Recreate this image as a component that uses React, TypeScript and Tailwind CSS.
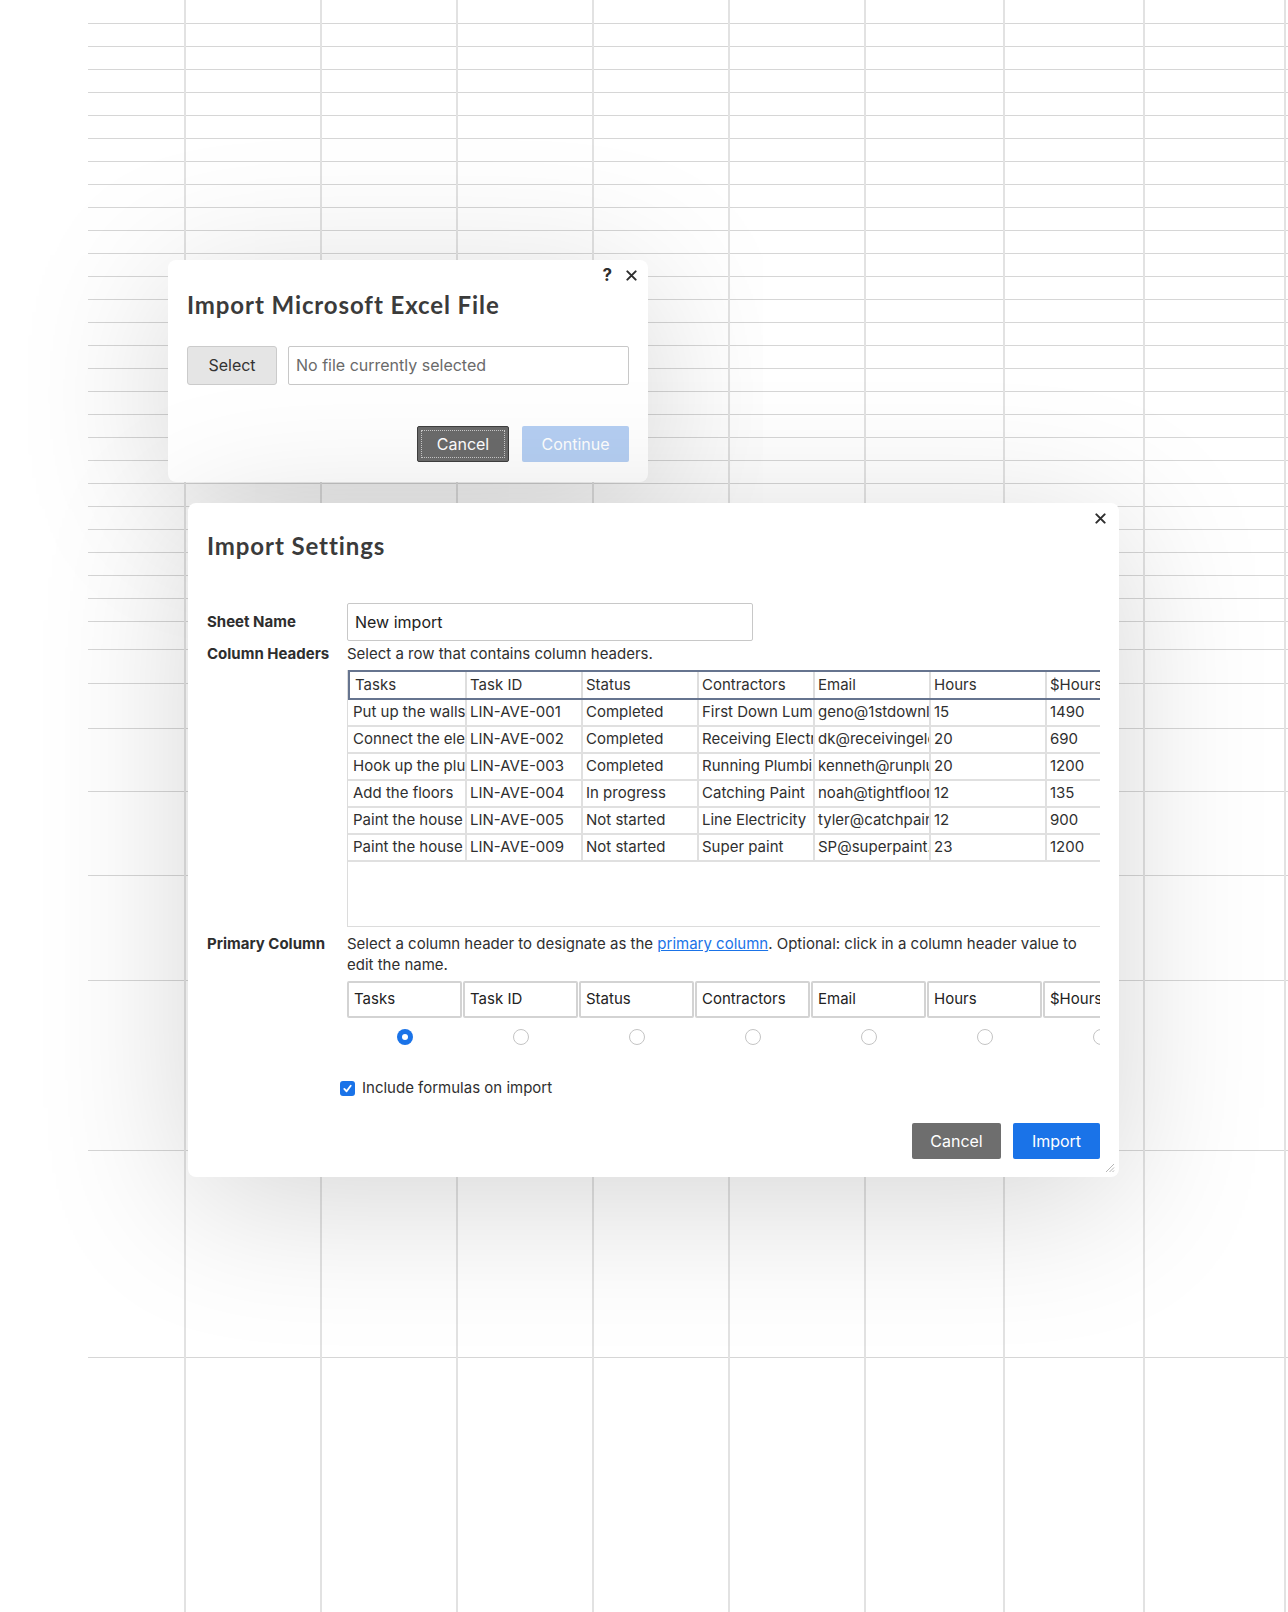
import React from 'react'

// ─── Background sheet grid ────────────────────────────────────────────────────

const rowLines = [
   23, 46, 69, 92, 115, 138, 161, 184, 207, 230, 253, 276, 299, 322, 345, 368, 391, 414,
   437, 460, 483, 506, 529, 552, 575, 598, 621, 649, 683, 728, 791, 875, 980, 1150, 1357,
]
const colLines = [185, 321, 457, 593, 729, 865, 1004, 1144, 1285]

const SheetGrid = () => (
   <div className="absolute inset-0">
      <div className="pl-[88px]">
         {rowLines.map((y, i) => (
            <div
               key={y}
               className="border-b border-[#d6d6d6]"
               style={{ height: y - (i === 0 ? -1 : rowLines[i - 1]) }}
            />
         ))}
      </div>
      <div className="absolute inset-0 flex">
         <div className="w-[184px] shrink-0" />
         {colLines.map((x, i) => (
            <div
               key={x}
               className="h-full shrink-0 border-l-2 border-[#e2e2e2]"
               style={{ width: i === colLines.length - 1 ? 4 : colLines[i + 1] - x }}
            />
         ))}
      </div>
   </div>
)

// ─── Small bits ───────────────────────────────────────────────────────────────

const CloseIcon = () => (
   <svg viewBox="0 0 12 12" className="w-[11px] h-[11px]" fill="none" stroke="#2e2e2e" strokeWidth="2.2" strokeLinecap="round">
      <path d="M1.5 1.5 L10.5 10.5 M10.5 1.5 L1.5 10.5" />
   </svg>
)

const ResizeGrip = () => (
   <svg viewBox="0 0 12 12" className="absolute right-[4px] bottom-[4px] w-[12px] h-[12px]" fill="none" stroke="#b5b5b5" strokeWidth="1">
      <path d="M11 3 L3 11 M11 6.5 L6.5 11 M11 9.5 L9.5 11" />
   </svg>
)

// ─── Excel import dialog ──────────────────────────────────────────────────────

const ExcelDialog = () => (
   <div className="absolute left-[168px] top-[260px] w-[480px] h-[222px] bg-white rounded-lg shadow-[0_24px_150px_rgba(0,0,0,0.17)] px-[19px] pt-[5px] font-[Inter]">
      <div className="flex justify-end items-center gap-[14px] h-[20px] -mr-[8px]">
         <span className="text-[17px] font-bold text-[#2e2e2e] leading-none">?</span>
         <CloseIcon />
      </div>
      <h2 className="mt-[6px] text-[24px] leading-[28px] font-bold tracking-[0.9px] text-[#3b3b3b] font-[Lato]">Import Microsoft Excel File</h2>
      <div className="mt-[27px] flex gap-[11px]">
         <button className="w-[90px] h-[39px] pb-[2px] bg-[#e5e5e5] border border-[#cbcbcb] rounded-[3px] text-[16px] text-[#333]">
            Select
         </button>
         <div className="flex-1 h-[39px] pb-[2px] border border-[#c8c8c8] rounded-[2px] flex items-center pl-[7px] text-[16px] text-[#6a6a6a]">
            No file currently selected
         </div>
      </div>
      <div className="mt-[41px] flex justify-end gap-[13px]">
         <button className="relative w-[92px] h-[36px] bg-[#6b6b6b] border border-[#3f3f3f] rounded-[2px] text-[16px] text-white">
            <span className="absolute inset-[3px] border border-dotted border-[#c9c9c9]" />
            Cancel
         </button>
         <button className="w-[107px] h-[36px] bg-[#b5cff3] rounded-[2px] text-[16px] text-white">Continue</button>
      </div>
   </div>
)

// ─── Import settings dialog ───────────────────────────────────────────────────

const headers = ['Tasks', 'Task ID', 'Status', 'Contractors', 'Email', 'Hours', '$Hours']

const rows = [
   ['Put up the walls', 'LIN-AVE-001', 'Completed', 'First Down Lumber', 'geno@1stdownlumber.com', '15', '1490'],
   ['Connect the electricity', 'LIN-AVE-002', 'Completed', 'Receiving Electric', 'dk@receivingelectric.com', '20', '690'],
   ['Hook up the plumbing', 'LIN-AVE-003', 'Completed', 'Running Plumbing', 'kenneth@runplumbing.com', '20', '1200'],
   ['Add the floors', 'LIN-AVE-004', 'In progress', 'Catching Paint', 'noah@tightfloors.com', '12', '135'],
   ['Paint the house', 'LIN-AVE-005', 'Not started', 'Line Electricity', 'tyler@catchpaint.com', '12', '900'],
   ['Paint the house', 'LIN-AVE-009', 'Not started', 'Super paint', 'SP@superpaint.com', '23', '1200'],
]

const PreviewTable = () => (
   <div className="mt-[6px] w-[753px] h-[257px] overflow-hidden border-l border-b border-[#dcdcdc]">
      <div className="w-[820px]">
         <div className="flex h-[30px] border-y-2 border-l-2 border-[#66748f]">
            {headers.map((h, i) => (
               <div
                  key={h}
                  className={`${i === 0 ? 'w-[117px] pl-[5px]' : 'w-[116px] pl-[3px]'} shrink-0 flex items-center overflow-hidden whitespace-nowrap border-r-2 border-[#dedede]`}
               >
                  {h}
               </div>
            ))}
         </div>
         {rows.map((r, ri) => (
            <div key={ri} className="flex h-[27px] border-b-2 border-[#e0e0e0]">
               {r.map((c, i) => (
                  <div
                     key={i}
                     className={`${i === 0 ? 'w-[119px] pl-[5px]' : 'w-[116px] pl-[3px]'} shrink-0 flex items-center overflow-hidden whitespace-nowrap border-r-2 border-[#e0e0e0]`}
                  >
                     {c}
                  </div>
               ))}
            </div>
         ))}
      </div>
   </div>
)

const Radio = ({ checked }: { checked?: boolean }) =>
   checked ? (
      <div className="w-[16px] h-[16px] rounded-full bg-[#1a73e8] flex items-center justify-center">
         <div className="w-[6px] h-[6px] rounded-full bg-white" />
      </div>
   ) : (
      <div className="w-[16px] h-[16px] rounded-full border border-[#c4c4c4] bg-white" />
   )

const PrimaryColumnPicker = () => (
   <div className="w-[753px] overflow-hidden">
      <div className="mt-[6px] flex gap-[1px] w-[820px]">
         {headers.map((h) => (
            <div key={h} className="w-[115px] h-[37px] shrink-0 border-2 border-[#d3d3d3] rounded-[2px] flex items-center pl-[5px] text-[#222] whitespace-nowrap overflow-hidden">
               {h}
            </div>
         ))}
      </div>
      <div className="mt-[11px] flex gap-[1px] w-[820px]">
         {headers.map((h, i) => (
            <div key={h} className="w-[115px] shrink-0 flex justify-center">
               <Radio checked={i === 0} />
            </div>
         ))}
      </div>
   </div>
)

const SettingsDialog = () => (
   <div className="absolute left-[188px] top-[503px] w-[931px] h-[674px] bg-white rounded-lg shadow-[0_24px_150px_rgba(0,0,0,0.17)] px-[19px] pt-[29px] font-[Inter] text-[15px] text-[#2f2f2f]">
      <button className="absolute right-[13px] top-[10px]">
         <CloseIcon />
      </button>
      <h2 className="text-[24px] leading-[28px] font-bold tracking-[0.9px] text-[#3b3b3b] font-[Lato]">Import Settings</h2>

      <div className="mt-[43px] flex items-center">
         <div className="w-[140px] font-bold text-[#2e2e2e]">Sheet Name</div>
         <div className="w-[406px] h-[38px] pb-[1px] border border-[#c8c8c8] rounded-[2px] flex items-center pl-[7px] text-[16px] text-[#222]">
            New import
         </div>
      </div>

      <div className="mt-[3px] flex">
         <div className="w-[140px] shrink-0 font-bold text-[#2e2e2e] leading-[20px]">Column Headers</div>
         <div>
            <p className="leading-[20px]">Select a row that contains column headers.</p>
            <PreviewTable />
         </div>
      </div>

      <div className="mt-[6px] flex">
         <div className="w-[140px] shrink-0 font-bold text-[#2e2e2e] leading-[21px]">Primary Column</div>
         <div className="w-[753px]">
            <p className="leading-[21px]">
               Select a column header to designate as the{' '}
               <a className="text-[#1a73e8] underline">primary column</a>. Optional: click in a column header value to edit the name.
            </p>
            <PrimaryColumnPicker />
         </div>
      </div>

      <label className="mt-[33px] ml-[133px] flex items-center gap-[7px]">
         <span className="w-[15px] h-[15px] rounded-[3px] bg-[#1a73e8] flex items-center justify-center">
            <svg viewBox="0 0 12 12" className="w-[11px] h-[11px]" fill="none" stroke="white" strokeWidth="2" strokeLinecap="round" strokeLinejoin="round">
               <path d="M2.5 6.5 L5 9 L9.5 3" />
            </svg>
         </span>
         <span className="leading-[20px]">Include formulas on import</span>
      </label>

      <div className="mt-[25px] flex justify-end gap-[12px]">
         <button className="w-[89px] h-[36px] bg-[#6e6e6e] rounded-[2px] text-[16px] text-white">Cancel</button>
         <button className="w-[87px] h-[36px] bg-[#1a73e8] rounded-[2px] text-[16px] text-white">Import</button>
      </div>
      <ResizeGrip />
   </div>
)

// ─── Page ─────────────────────────────────────────────────────────────────────

export default function App() {
   return (
      <div className="relative w-[1288px] h-[1612px] bg-white overflow-hidden">
         <SheetGrid />
         <ExcelDialog />
         <SettingsDialog />
      </div>
   )
}
